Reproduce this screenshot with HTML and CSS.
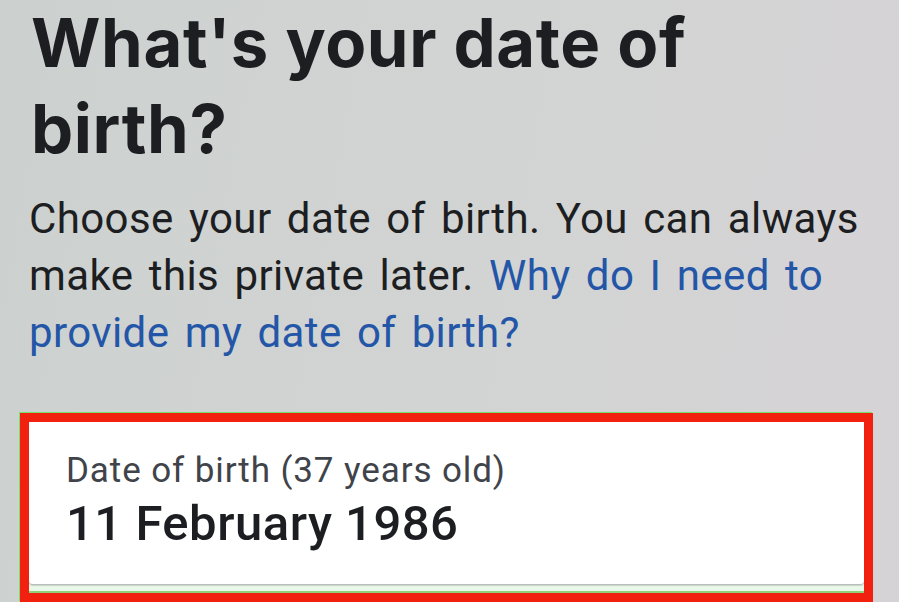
FILE: index.html
```html
<!DOCTYPE html>
<html lang="en">
<head>
<meta charset="utf-8">
<title>Date of birth</title>
<link rel="stylesheet" href="styles.css">
</head>
<body>
<main class="screen">
  <h1 class="title">What's your date of birth?</h1>
  <p class="intro">Choose your date of birth. You can always make this private later. <a class="link" href="#">Why do I need to provide my date of birth?</a></p>
  <div class="frame">
    <div class="field">
      <div class="field-label">Date of birth (37 years old)</div>
      <div class="field-value">11 February 1986</div>
    </div>
  </div>
</main>
</body>
</html>
```

FILE: styles.css
```css
html, body {
  margin: 0;
  padding: 0;
  height: 100%;
  overflow: hidden;
}

body {
  background: linear-gradient(100deg, #ccd1d0 0%, #d2d4d3 50%, #d6d3d6 100%);
  color: #1c1e21;
  font-family: Roboto, "Noto Sans", sans-serif;
}

.screen {
  display: flex;
  flex-direction: column;
}

.title {
  margin: 0;
  width: 720px;
  padding: 0 0 0 31px;
  font-family: Inter, "Open Sans", sans-serif;
  font-weight: 700;
  font-size: 67px;
  line-height: 86px;
  color: #1c1e21;
  letter-spacing: 0.6px;
}

.intro {
  margin: 18px 0 0;
  padding: 0 20px 0 29px;
  font-size: 42px;
  line-height: 57px;
  letter-spacing: 0.4px;
  word-spacing: 4.5px;
  color: #1c1e21;
}

.link {
  color: #2456a8;
  text-decoration: none;
}

.frame {
  margin: 52px 26px 0 20px;
  border: 9px solid #f2200f;
  box-shadow: -1px -1px 0 #79e06b;
  background: linear-gradient(to top, #8fd27e 0 2px, #eaf8ea 2px 100%);
  padding-bottom: 8px;
}

.field {
  height: 163px;
  box-sizing: border-box;
  background: #ffffff;
  border-bottom: 1px solid #b9bdbc;
  border-radius: 0 0 4px 4px;
  box-shadow: 0 1px 1px rgba(0, 0, 0, 0.15);
  padding: 29px 0 0 37px;
}

.field-label {
  font-size: 35px;
  line-height: 40px;
  letter-spacing: 0.9px;
  color: #40444a;
}

.field-value {
  margin-top: 5px;
  font-size: 49px;
  line-height: 56px;
  font-weight: 500;
  letter-spacing: 0.5px;
  color: #1c1e21;
}
```
